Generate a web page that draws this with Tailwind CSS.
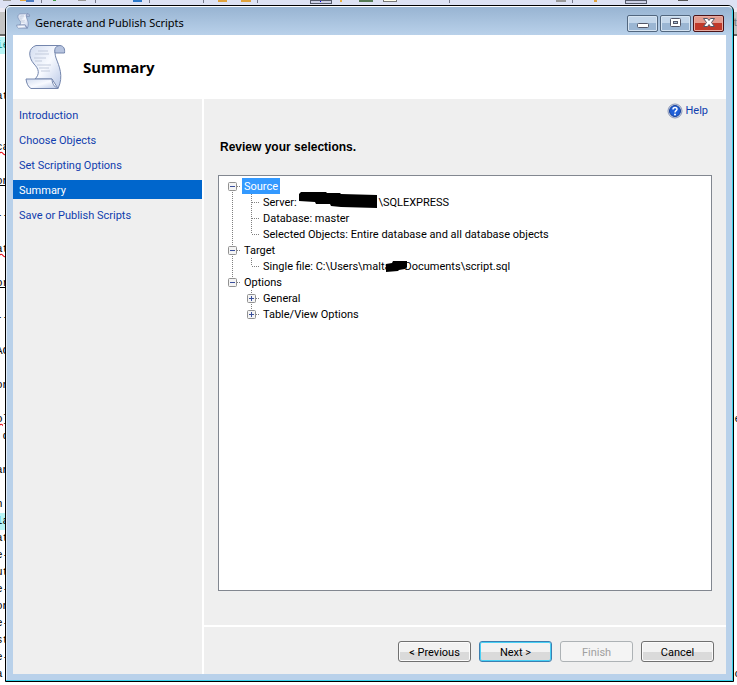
<!DOCTYPE html>
<html lang="en">
<head>
    <meta charset="UTF-8">
    <meta name="viewport" content="width=device-width, initial-scale=1.0">
    <title>Generate and Publish Scripts</title>
    <script src="https://cdn.jsdelivr.net/npm/@tailwindcss/browser@4"></script>
</head>
<body class="relative h-screen overflow-hidden bg-white font-[Roboto,'Liberation_Sans',sans-serif] text-[11px] leading-4 text-black">

    <!-- Editor behind the dialog -->
    <div class="absolute inset-0 overflow-hidden">
        <div class="h-2 bg-[#dde2f3]">
            <svg class="block h-2 w-full" shape-rendering="crispEdges">
                <path d="M3 0h8v1H3z" fill="#999"/>
                <path d="M20 0h6v1h-6zM218 0h9v2h-9zM241 0h10v2h-10zM594 0h3v2h-3z" fill="#dfa23c"/>
                <path d="M26 0h8v2h-8z" fill="#4c7bc0"/>
                <path d="M41 0h1v3h-1zM95 0h1v3h-1zM149 0h1v3h-1zM203 0h1v3h-1zM257 0h1v3h-1zM449 0h1v3h-1zM572 0h1v3h-1z" fill="#777b8c"/>
                <path d="M53 0h3v1h-3z" fill="#3d9a44"/>
                <path d="M78 0h8v1h-8zM556 0h10v2h-10z" fill="#999"/>
                <path d="M133 0h9v2h-9z" fill="#2b78c8"/>
                <path d="M310 0h21v3h-21zM625 0h21v3h-21z" fill="#ccd1e6" stroke="#555b6b"/>
                <path d="M320 1h1v1h-1z" fill="#00f"/>
                <path d="M340 0h2v2h-2z" fill="#e8b040"/>
                <path d="M359 0h14v2h-14z" fill="#557a55"/>
                <path d="M383 0h14v2h-14z" fill="#777"/>
                <path d="M384 0h12v1h-12z" fill="#ffe"/>
                <path d="M678 0h10v1h-10z" fill="#555"/>
            </svg>
        </div>
        <div class="flex h-7 items-center justify-end border-t-4 border-b-2 border-t-[#eceaf2] border-b-[#666] bg-[#c4c4c4] text-[#777]">t</div>
        <div class="flex justify-between pt-px font-['Liberation_Mono',monospace] leading-[17px]">
            <div id="codeLeft" class="-ml-1"></div>
            <div id="codeRight" class="-mr-1"></div>
        </div>
    </div>

    <main class="relative mt-[5px] mr-[3px] ml-[5px] flex h-[calc(100vh-8px)] flex-col rounded-t-md border border-black bg-[#35d3ec] pr-px pb-px">
        <div class="flex min-h-0 flex-1 flex-col rounded-t border-l border-[#e4eef9] bg-[#b9d1ea] px-1.5 pb-1.5">
            <header class="-mx-1.5 flex h-[29px] shrink-0 items-center rounded-t border-t border-white bg-linear-to-b from-[#98b4d2] to-[#b9d1ea] pr-2 pl-2">
                <svg class="size-4" viewBox="0 0 48 48">
                    <use href="#scroll" stroke-width="2"/>
                </svg>
                <h1 class="ml-1 flex-1 pt-1 font-['Noto_Sans','Open_Sans',sans-serif]">Generate and Publish Scripts</h1>
                <div class="flex gap-0.5 pt-1">
                    <button aria-label="Minimize" class="flex h-[17px] w-[31px] items-center justify-center rounded-xs border border-[#52677f] bg-linear-to-b from-[#c3d6ea] from-50% to-[#9bb6d3] to-50% shadow-[inset_0_0_0_1px_#d6e4f2]">
                        <svg class="h-3 w-3" viewBox="0 0 12 12"><rect x=".5" y="6.500" width="11" height="4" rx="1" fill="#fff" stroke="#535666"/></svg>
                    </button>
                    <button aria-label="Maximize" class="flex h-[17px] w-[31px] items-center justify-center rounded-xs border border-[#52677f] bg-linear-to-b from-[#c3d6ea] from-50% to-[#9bb6d3] to-50% shadow-[inset_0_0_0_1px_#d6e4f2]">
                        <svg class="h-3 w-3" viewBox="0 0 12 12"><rect x=".5" y="1.500" width="10" height="8" rx="1" fill="#fff" stroke="#535666"/><rect x="3.500" y="4.500" width="4" height="2" fill="#a9bfd6" stroke="#535666"/></svg>
                    </button>
                    <button aria-label="Close" class="flex h-[17px] w-[31px] items-center justify-center rounded-xs border border-[#4c1418] bg-linear-to-b from-[#e39b8e] from-50% to-[#c0392a] to-50% shadow-[inset_0_0_0_1px_#e9aca2]">
                        <svg class="h-3 w-3" viewBox="0 0 12 12"><path d="M.5 1.500H4.500L6 3.500L7.500 1.500H11.500L8.500 5.500L11.500 9.500H7.500L6 7.500L4.500 9.500H.5L3.500 5.500Z" fill="#fff" stroke="#535666"/></svg>
                    </button>
                </div>
            </header>

            <div class="flex h-16 shrink-0 items-center bg-white pl-2">
                <svg class="size-12" viewBox="0 0 48 48">
                    <defs>
                        <linearGradient id="paper" x1="0" y1="0" x2="1" y2="1">
                            <stop offset="0" stop-color="#d3ddf0"/>
                            <stop offset=".5" stop-color="#f8faff"/>
                            <stop offset="1" stop-color="#b9c8e6"/>
                        </linearGradient>
                        <g id="scroll" stroke="#7486ad" stroke-linejoin="round">
                            <path d="M15 2.500H39C34 4 33 9 35 15C38 23 43 33 37 45.500L31 36H14C19 31 18 26 13 21C7 14 7 5 15 2.500Z" fill="url(#paper)"/>
                            <path d="M39 2.500C43 3 44 6 43.500 10H34C33 5 35 3 39 2.500Z" fill="#b7c4df"/>
                            <path d="M5 36H31C31 40 33 44 37 45.500H10C7 44 5.500 40 5 36Z" fill="url(#paper)"/>
                            <path d="M17 8h10M14 11h14M13 15h12M14 18h7M16 22h14M18 25h10M20 28h9" fill="none" stroke="#c3cbdc"/>
                        </g>
                    </defs>
                    <use href="#scroll"/>
                </svg>
                <h2 class="ml-3.5 font-['Noto_Sans','Open_Sans',sans-serif] text-[15px] font-bold">Summary</h2>
            </div>

            <div class="flex min-h-0 flex-1 bg-[#efefef]">
                <nav class="flex w-[191px] shrink-0 flex-col gap-1.5 border-r-2 border-white pt-1.5 text-[#0f3dae]">
                    <a href="#" class="block h-[19px] pl-1.5 leading-[21px]">Introduction</a>
                    <a href="#" class="block h-[19px] pl-1.5 leading-[21px]">Choose Objects</a>
                    <a href="#" class="block h-[19px] pl-1.5 leading-[21px]">Set Scripting Options</a>
                    <a href="#" aria-current="step" class="block h-[19px] bg-[#0066cc] pl-1.5 leading-[21px] text-white">Summary</a>
                    <a href="#" class="block h-[19px] pl-1.5 leading-[21px]">Save or Publish Scripts</a>
                </nav>

                <div class="flex min-w-0 flex-1 flex-col">
                    <section class="flex min-h-0 flex-1 flex-col px-3.5 pt-1 pb-[34px]">
                        <a href="#" class="flex items-center gap-0.5 self-end pr-1 text-[#0f3dae]">
                            <svg class="size-4" viewBox="0 0 16 16">
                                <circle cx="8" cy="8" r="7" fill="#d9e0ee" stroke="#8995b5"/>
                                <circle cx="8" cy="8" r="5.500" fill="#1f5fd8" stroke="#174098"/>
                                <path d="M6 6.500C6 3.800 10 3.800 10 6.200C10 7.700 8 7.700 8 9.500" fill="none" stroke="#fff" stroke-width="1.500"/>
                                <circle cx="8" cy="11.500" r="1" fill="#fff"/>
                            </svg>
                            Help
                        </a>
                        <h3 class="mt-5 ml-0.5 font-['Liberation_Sans',sans-serif] text-[12px] leading-4 font-bold">Review your selections.</h3>
                        <ul id="tree" class="mt-5 min-h-0 flex-1 border border-[#828790] bg-white pt-0.5 pl-2"></ul>
                    </section>

                    <footer class="flex h-[49px] shrink-0 justify-end gap-2 border-t-2 border-white pt-3.5 pr-3">
                        <button class="h-[21px] w-[73px] rounded-[3px] border border-[#707070] bg-linear-to-b from-[#f2f2f2] from-50% to-[#dadada] to-50% pt-0.5 shadow-[inset_0_0_0_1px_#fbfbfb]">&lt; Previous</button>
                        <button class="h-[21px] w-[73px] rounded-[3px] border border-[#3c7fb1] bg-linear-to-b from-[#f2f2f2] from-50% to-[#dadada] to-50% pt-0.5 shadow-[inset_0_0_0_1px_#48d0f5]">Next &gt;</button>
                        <button disabled class="h-[21px] w-[73px] rounded-[3px] border border-[#adb2b5] bg-[#f4f4f4] pt-0.5 text-[#a0a0a0]">Finish</button>
                        <button class="h-[21px] w-[73px] rounded-[3px] border border-[#707070] bg-linear-to-b from-[#f2f2f2] from-50% to-[#dadada] to-50% pt-0.5 shadow-[inset_0_0_0_1px_#fbfbfb]">Cancel</button>
                    </footer>
                </div>
            </div>
        </div>
    </main>

    <script>
        const leftLines = ['ie', '', '', 'at', '', '', 'ca', '', 'on', '', '--', '', 'at', '', 'or', '', '--', '', 'AC', '', 'on', '', 'o]', ' d', '', 'an', '', 'n', 'la', 'at', 'e-', 'ut', 'e-', 'on', 'e-', 'st', 'e-', 'a'];
        const rightLines = { 22: 'e', 37: 'o' };
        const lineStyles = {
            0: 'bg-[#b8f5f5] text-[#0a8a8a]',
            6: 'underline decoration-wavy decoration-red-600',
            8: 'underline',
            12: 'underline decoration-wavy decoration-red-600',
            14: 'underline',
            22: 'underline decoration-wavy decoration-red-600',
            28: 'bg-[#b8f5f5]',
        };

        leftLines.forEach((line, i) => {
            const left = document.createElement('div');
            left.className = 'h-[17px] whitespace-pre ' + (lineStyles[i] || '');
            left.textContent = line;
            document.getElementById('codeLeft').appendChild(left);

            const right = document.createElement('div');
            right.className = 'h-[17px] whitespace-pre';
            right.textContent = rightLines[i] || '';
            document.getElementById('codeRight').appendChild(right);
        });

        // first / last cut the vertical guide short, trunk carries the outer one
        const rows = [
            { text: 'Source', level: 0, box: '-', selected: true, first: true },
            { text: 'Server: ', level: 1, trunk: true, mask: 'server', rest: '\\SQLEXPRESS' },
            { text: 'Database: master', level: 1, trunk: true },
            { text: 'Selected Objects: Entire database and all database objects', level: 1, trunk: true, last: true },
            { text: 'Target', level: 0, box: '-' },
            { text: 'Single file: C:\\Users\\malta', level: 1, trunk: true, last: true, mask: 'user', rest: 'Documents\\script.sql' },
            { text: 'Options', level: 0, box: '-', last: true },
            { text: 'General', level: 1, box: '+' },
            { text: 'Table/View Options', level: 1, box: '+', last: true },
        ];

        const masks = {
            server: '<svg class="-mt-0.5 h-4 w-[79px]" viewBox="0 0 79 16"><path d="M2 0L27 0L28 1L41 1L42 2L78 3V16L42 15L32 14L31 12L17 12L16 10L0 9V2Z"/></svg>',
            user: '<svg class="-mx-1 h-4 w-[22px]" viewBox="0 0 22 16"><path d="M0 6L6 5L7 3L21 3V9L19 11L13 12L12 13L0 14Z"/></svg>',
        };

        function guide(row) {
            const top = row.first ? 8 : 0;
            const bottom = row.last ? 8 : 16;
            let svg = `<path d="M5.5 ${top}V${bottom}M6 8.5H13" stroke="#808080" stroke-dasharray="1 1"/>`;
            if (row.box) {
                svg += '<rect x="1.5" y="4.5" width="8" height="8" rx="1" fill="#f4f4f4" stroke="#919191"/><path d="M3 8.5H8" stroke="#3a4f9b"/>';
            }
            if (row.box === '+') {
                svg += '<path d="M5.5 6V11" stroke="#3a4f9b"/>';
            }
            return `<svg class="h-4 w-[15px]" viewBox="0 0 15 16">${svg}</svg>`;
        }

        rows.forEach(row => {
            const item = document.createElement('li');
            item.className = 'flex h-4 leading-[18px] whitespace-nowrap';
            let html = '';
            if (row.level === 1) {
                html += '<svg class="h-4 w-[19px]" viewBox="0 0 19 16">' + (row.trunk ? '<path d="M5.5 0V16" stroke="#808080" stroke-dasharray="1 1"/>' : '') + '</svg>';
            }
            html += guide(row);
            html += row.selected
                ? `<span class="bg-[#3399ff] px-0.5 text-white">${row.text}</span>`
                : `<span class="whitespace-pre pl-0.5">${row.text}</span>`;
            if (row.mask) {
                html += masks[row.mask] + `<span>${row.rest}</span>`;
            }
            item.innerHTML = html;
            document.getElementById('tree').appendChild(item);
        });
    </script>

</body>
</html>
